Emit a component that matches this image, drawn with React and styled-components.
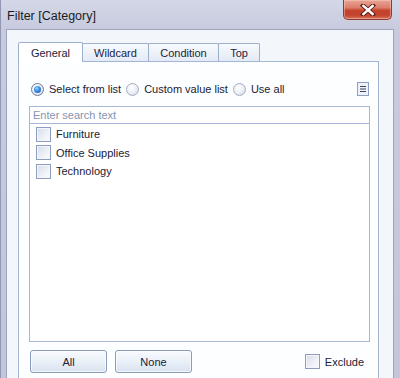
import React from 'react';
import styled, { createGlobalStyle } from 'styled-components';

const Global = createGlobalStyle`
  html, body {
    margin: 0;
    padding: 0;
    background: #c4c7da;
  }
  body {
    font-family: "Liberation Sans", Arial, sans-serif;
  }
`;

const Window = styled.div`
  width: 400px;
  height: 378px;
  box-sizing: border-box;
  overflow: hidden;
  display: flex;
  flex-direction: column;
  background: linear-gradient(to bottom, #d4d7e7 0, #c8cbde 29px, #c3c6d9 100%);
  border-left: 1px solid #9397b1;
`;

const TitleBar = styled.div`
  height: 29px;
  flex: none;
  display: flex;
  justify-content: space-between;
  align-items: flex-start;
  padding-left: 6px;
`;

const Title = styled.div`
  font-size: 12.5px;
  color: #1a1a22;
  padding-top: 10px;
  line-height: 1;
`;

const CloseButton = styled.div`
  width: 49px;
  height: 20px;
  margin-right: 8px;
  box-sizing: border-box;
  border: 1px solid #8a3b32;
  border-top: none;
  border-radius: 0 0 5px 5px;
  background: linear-gradient(to bottom, #e9a595 0, #dc7e6c 40%, #c5432c 55%, #c2452f 80%, #d9735a 100%);
  box-shadow: inset 0 0 0 1px rgba(255, 210, 200, 0.45);
  display: flex;
  align-items: center;
  justify-content: center;
`;

const Client = styled.div`
  flex: none;
  margin: 0 6px 0 5px;
  padding: 12px 0 0 11px;
  border: 1px solid #9ea4be;
  border-bottom: none;
  background: #f3f6fb;
  height: 380px;
`;

const TabRow = styled.div`
  display: flex;
  align-items: flex-end;
  height: 20px;
  margin-bottom: -1px;
  position: relative;
  z-index: 1;
`;

const Tab = styled.div`
  box-sizing: border-box;
  width: ${p => p.$w}px;
  height: ${p => (p.$active ? 20 : 19)}px;
  margin-left: ${p => (p.$first ? 0 : -1)}px;
  border: 1px solid #9cafcd;
  border-bottom: ${p => (p.$active ? 'none' : '1px solid #a3b5d3')};
  border-radius: 2px 2px 0 0;
  background: ${p => (p.$active ? '#ffffff' : 'linear-gradient(to bottom, #f7f9fd 0, #e4ebf6 100%)')};
  position: relative;
  z-index: ${p => (p.$active ? 2 : 1)};
  font-size: 11px;
  color: #1c233b;
  display: flex;
  align-items: center;
  justify-content: center;
  padding-top: ${p => (p.$active ? 0 : 1)}px;
`;

const Panel = styled.div`
  box-sizing: border-box;
  width: 361px;
  height: 330px;
  border: 1px solid #a3b5d3;
  background: #fdfeff;
  padding: 19px 8px 0 10px;
`;

const OptionRow = styled.div`
  display: flex;
  align-items: center;
  height: 16px;
  padding-left: 2px;
`;

const RadioLabel = styled.label`
  display: flex;
  align-items: center;
  gap: 5px;
  margin-right: 5px;
  font-size: 11px;
  color: #1c2135;
`;

const Radio = styled.span`
  width: 13px;
  height: 13px;
  box-sizing: border-box;
  border-radius: 50%;
  border: 1px solid ${p => (p.$on ? '#6a7a98' : '#a4aec0')};
  background: radial-gradient(circle at 40% 35%, #ffffff 0, #eef1f6 45%, #cfd6e2 100%);
  display: flex;
  align-items: center;
  justify-content: center;

  &::after {
    content: '';
    display: ${p => (p.$on ? 'block' : 'none')};
    width: 7px;
    height: 7px;
    border-radius: 50%;
    background: radial-gradient(circle at 40% 35%, #9fd4ff 0, #3b8ae6 45%, #134ea8 100%);
  }
`;

const MenuBox = styled.div`
  margin-left: auto;
  margin-right: 1px;
  width: 12px;
  height: 14px;
  box-sizing: border-box;
  border: 1px solid #8e9fbd;
  background: #eef2f9;
  display: flex;
  align-items: center;
  justify-content: center;
`;

const ListBox = styled.div`
  margin-top: 9px;
  width: 341px;
  height: 236px;
  box-sizing: border-box;
  border: 1px solid #a7b8d6;
  background: #ffffff;
`;

const Search = styled.div`
  height: 17px;
  box-sizing: border-box;
  border-bottom: 1px solid #a7b8d6;
  padding-left: 3px;
  font-size: 11px;
  line-height: 17px;
  color: #8494b2;
`;

const Items = styled.div`
  padding: 1px 0 0 6px;
`;

const Item = styled.div`
  display: flex;
  align-items: center;
  gap: 5px;
  height: 18.5px;
  font-size: 11px;
  color: #1c2135;
`;

const Check = styled.span`
  width: 15px;
  height: 15px;
  box-sizing: border-box;
  border: 1px solid #8e9dbb;
  background: linear-gradient(135deg, #d5dce8 0, #eef1f7 60%, #fbfcfe 100%);
  box-shadow: inset 0 0 0 1px #f4f6fa;
  flex: none;
`;

const ButtonRow = styled.div`
  display: flex;
  align-items: center;
  margin-top: 8px;
  padding-left: 1px;
`;

const Button = styled.div`
  width: 77px;
  height: 23px;
  box-sizing: border-box;
  margin-right: 8px;
  border: 1px solid #8b9bb8;
  border-radius: 3px;
  background: linear-gradient(to bottom, #f8fafe 0, #eaf0f8 50%, #d8e2f1 100%);
  box-shadow: inset 0 0 0 1px rgba(255, 255, 255, 0.7);
  font-size: 11px;
  color: #1c2135;
  display: flex;
  align-items: center;
  justify-content: center;
`;

const Exclude = styled.label`
  margin-left: auto;
  margin-right: 6px;
  display: flex;
  align-items: center;
  gap: 5px;
  font-size: 11px;
  color: #1c2135;
`;

const tabs = [
  { name: 'General', w: 65 },
  { name: 'Wildcard', w: 67 },
  { name: 'Condition', w: 71 },
  { name: 'Top', w: 42 },
];

const options = ['Select from list', 'Custom value list', 'Use all'];
const values = ['Furniture', 'Office Supplies', 'Technology'];

export default function App() {
  return (
    <Window>
      <Global />
      <TitleBar>
        <Title>Filter [Category]</Title>
        <CloseButton>
          <svg width="16" height="12" viewBox="0 0 16 12">
            <path d="M3 1.5 L13 10.5 M13 1.5 L3 10.5" stroke="#5a1a12" strokeWidth="4.2" strokeLinecap="square" />
            <path d="M3.4 2 L12.6 10 M12.6 2 L3.4 10" stroke="#ffffff" strokeWidth="2.4" strokeLinecap="square" />
          </svg>
        </CloseButton>
      </TitleBar>
      <Client>
        <TabRow>
          {tabs.map((t, i) => (
            <Tab key={t.name} $w={t.w} $first={i === 0} $active={i === 0}>
              {t.name}
            </Tab>
          ))}
        </TabRow>
        <Panel>
          <OptionRow>
            {options.map((o, i) => (
              <RadioLabel key={o}>
                <Radio $on={i === 0} />
                {o}
              </RadioLabel>
            ))}
            <MenuBox>
              <svg width="6" height="6" viewBox="0 0 6 6">
                <path d="M0 0.5 H6 M0 3 H6 M0 5.5 H6" stroke="#3d4663" strokeWidth="1" />
              </svg>
            </MenuBox>
          </OptionRow>
          <ListBox>
            <Search>Enter search text</Search>
            <Items>
              {values.map(v => (
                <Item key={v}>
                  <Check />
                  {v}
                </Item>
              ))}
            </Items>
          </ListBox>
          <ButtonRow>
            <Button>All</Button>
            <Button>None</Button>
            <Exclude>
              <Check />
              Exclude
            </Exclude>
          </ButtonRow>
        </Panel>
      </Client>
    </Window>
  );
}
